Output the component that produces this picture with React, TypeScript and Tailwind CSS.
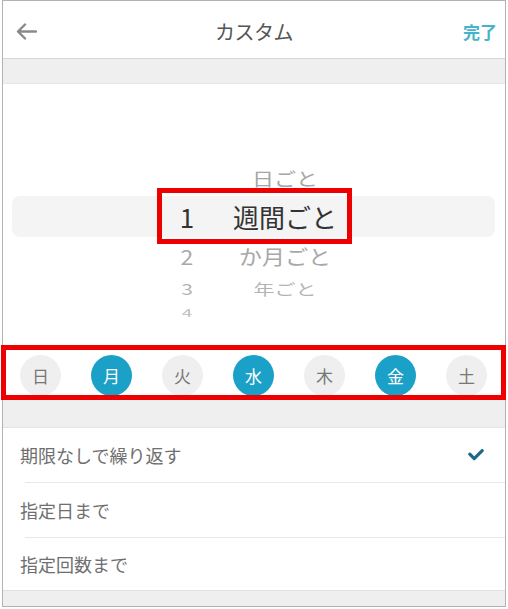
import React from "react";

const days = [
  { label: "日", on: false },
  { label: "月", on: true },
  { label: "火", on: false },
  { label: "水", on: true },
  { label: "木", on: false },
  { label: "金", on: true },
  { label: "土", on: false },
];

const endOptions = [
  { label: "期限なしで繰り返す", checked: true, h: "h-[54px]" },
  { label: "指定日まで", checked: false, h: "h-[54px]" },
  { label: "指定回数まで", checked: false, h: "h-[52px]" },
];

function BackArrow() {
  return (
    <svg width="21" height="17" viewBox="0 0 21 17" fill="none">
      <path
        d="M20 8.5H2.5M9 1.5L2 8.5L9 15.5"
        stroke="#8a8a8a"
        strokeWidth="2.4"
        strokeLinecap="round"
        strokeLinejoin="round"
      />
    </svg>
  );
}

function Check() {
  return (
    <svg width="16" height="12" viewBox="0 0 16 12" fill="none">
      <path
        d="M1.8 5.2L6.2 9.6L14.2 1.6"
        stroke="#1d6b82"
        strokeWidth="3.2"
        strokeLinecap="round"
        strokeLinejoin="round"
      />
    </svg>
  );
}

export default function App() {
  return (
    <div className="relative w-[508px] h-[609px] bg-white overflow-hidden font-['Noto_Sans_CJK_JP','Noto_Sans',sans-serif]">
      <div className="ml-[2px] w-[504px] h-[607px] border border-[#b2b2b2] flex flex-col">
        {/* header */}
        <div className="h-[58px] shrink-0 pt-[4px] border-b border-[#d6d6d6] grid grid-cols-[1fr_auto_1fr] items-center">
          <div className="pl-[13px] flex items-center">
            <BackArrow />
          </div>
          <div className="text-[20px] text-[#555] leading-none tracking-[-0.5px]">カスタム</div>
          <div className="justify-self-end pr-[8px] text-[17px] font-bold text-[#45b4cb] leading-none">完了</div>
        </div>
        <div className="h-[25px] shrink-0 bg-[#efefef] border-b border-[#e6e6e6]" />

        {/* interval wheel */}
        <div className="shrink-0 pt-[76px] flex flex-col">
          <div className="h-[36px] ml-[9px] mr-[10px] pl-[155px] flex items-center">
            <span className="w-[40px]" />
            <span className="w-[156px] text-center text-[22px] text-[#a6a6a6] leading-none scale-y-[0.82]">日ごと</span>
          </div>
          <div className="h-[41px] ml-[9px] mr-[10px] pl-[155px] flex items-center rounded-[8px] bg-[#f4f4f4]">
            <span className="w-[40px] text-center text-[26px] text-[#333] leading-none">1</span>
            <span className="w-[156px] text-center text-[26px] text-[#333] leading-none">週間ごと</span>
          </div>
          <div className="h-[38px] ml-[9px] mr-[10px] pl-[155px] flex items-center">
            <span className="w-[40px] text-center text-[23px] text-[#a8a8a8] leading-none scale-y-[0.9]">2</span>
            <span className="w-[156px] text-center text-[23px] text-[#a8a8a8] leading-none scale-y-[0.9]">か月ごと</span>
          </div>
          <div className="h-[26px] ml-[9px] mr-[10px] pl-[155px] flex items-center">
            <span className="w-[40px] text-center text-[21px] text-[#b4b4b4] leading-none scale-y-[0.72]">3</span>
            <span className="w-[156px] text-center text-[21px] text-[#b4b4b4] leading-none scale-y-[0.72]">年ごと</span>
          </div>
          <div className="h-[22px] ml-[9px] mr-[10px] pl-[155px] flex items-start overflow-hidden">
            <span className="w-[40px] pt-[2px] text-center text-[19px] text-[#c0c0c0] leading-none scale-y-[0.58]">4</span>
          </div>
          <div className="h-[32px]" />
        </div>

        {/* weekdays */}
        <div className="h-[45px] shrink-0 pl-[17px] pr-[18px] flex justify-between items-start">
          {days.map((d) => (
            <div
              key={d.label}
              className={
                d.on
                  ? "w-[41px] h-[41px] rounded-full bg-[#1ba0c8] text-white flex items-center justify-center text-[17px] leading-none"
                  : "w-[41px] h-[41px] rounded-full bg-[#efefef] text-[#777] flex items-center justify-center text-[17px] leading-none"
              }
            >
              {d.label}
            </div>
          ))}
        </div>
        <div className="h-[28px] shrink-0 bg-[#efefef] border-b border-[#e4e4e4]" />

        {/* end condition list */}
        <div className="shrink-0 flex flex-col">
          {endOptions.map((o, i) => (
            <React.Fragment key={o.label}>
              <div className={`${o.h} pl-[17px] pr-[21px] flex items-center justify-between`}>
                <span className="text-[18px] text-[#6f6f6f] leading-none">{o.label}</span>
                {o.checked && <Check />}
              </div>
              {i < endOptions.length - 1 && <div className="h-px ml-[22px] bg-[#e8e8e8]" />}
            </React.Fragment>
          ))}
        </div>
        <div className="flex-1 bg-[#efefef] border-t border-[#e2e2e2]" />
      </div>

      {/* highlight frames */}
      <div className="absolute left-[157px] top-[188px] w-[195px] h-[56px] border-[5px] border-[#ee0000]" />
      <div className="absolute left-[1px] top-[345px] w-[505px] h-[55px] border-[5px] border-[#ee0000]" />
    </div>
  );
}
